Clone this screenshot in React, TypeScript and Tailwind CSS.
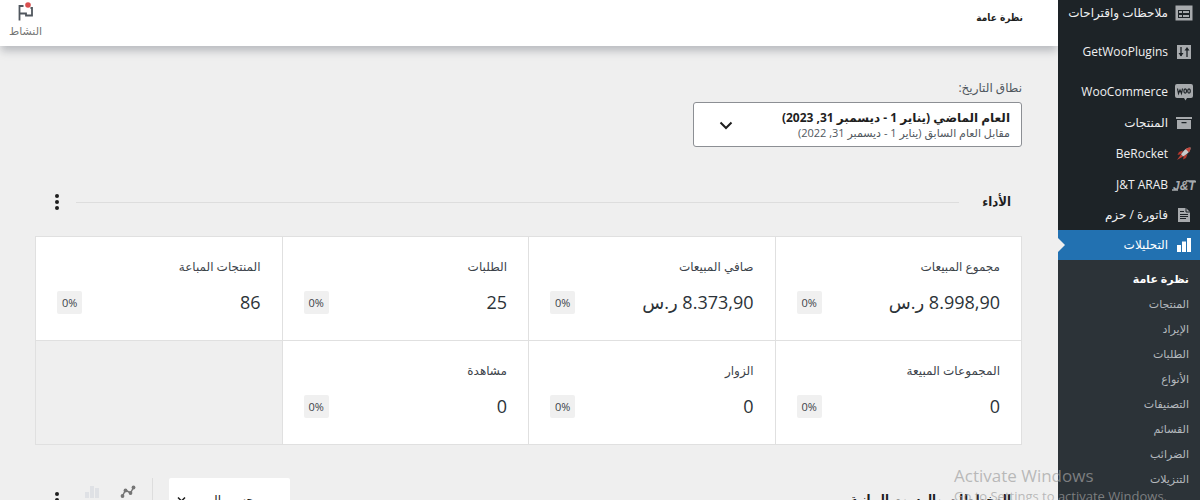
import type { ReactNode } from 'react';

type MenuItem = {
  label: string;
  icon: ReactNode;
  active?: boolean;
};

type Stat = {
  label: string;
  value: string;
  currency?: string;
};

const FeedbackIcon = () => (
  <svg width="18" height="16" viewBox="0 0 18 16" fill="#a7aaad">
    <path
      fillRule="evenodd"
      d="M0.500 0.500h17v15h-17zM3 5v8h12V5z"
    />
    <path d="M4 6h3v2H4zM8 6h6v2H8zM4 10h3v2H4zM8 10h6v2H8z" />
  </svg>
);

const SlidersIcon = () => (
  <svg width="18" height="16" viewBox="0 0 18 16">
    <rect x="2" y="1" width="14" height="14" fill="#a7aaad" />
    <path d="M6 3v9M12 5v8" stroke="#1d2327" strokeWidth="1.300" />
    <path d="M3.500 9h5L6 12.500zM9.500 6.500h5L12 3z" fill="#1d2327" />
  </svg>
);

const WooIcon = () => (
  <svg width="18" height="18" viewBox="0 0 18 18">
    <path
      d="M2 1h14a2 2 0 0 1 2 2v10a2 2 0 0 1-2 2h-4l-1.500 2.500L9 15H2a2 2 0 0 1-2-2V3a2 2 0 0 1 2-2z"
      fill="#a7aaad"
    />
    <path
      d="M2.500 5.500l1 5 1.500-3.500 1.500 3.500 1-5"
      fill="none"
      stroke="#1d2327"
      strokeWidth="1.200"
    />
    <ellipse cx="10.200" cy="8" rx="1.300" ry="2.100" fill="none" stroke="#1d2327" strokeWidth="1.200" />
    <ellipse cx="14" cy="8" rx="1.300" ry="2.100" fill="none" stroke="#1d2327" strokeWidth="1.200" />
  </svg>
);

const ArchiveIcon = () => (
  <svg width="18" height="16" viewBox="0 0 18 16" fill="#a7aaad">
    <path d="M1 2h16v2H1z" />
    <path fillRule="evenodd" d="M2 5h14v9H2zM6.500 7v1.200h5V7z" />
  </svg>
);

const RocketIcon = () => (
  <svg width="18" height="16" viewBox="0 0 18 16">
    <path d="M8 4.500L4 6 2.500 9l4-1zM12.500 8L11 12 8 13.500l1-4z" fill="#b5372c" />
    <path d="M15.500 1.500c-4 0-7 3-9.500 7L8 10.500c4.500-2.500 7.500-5 7.500-9z" fill="#c9cacb" />
    <path d="M15.500 1.500c-2 0-3.600.6-4.900 1.500l3.400 3.400c1-1.400 1.500-3 1.500-4.900z" fill="#c4453a" />
    <path d="M6 8.500L2 14l6-3.500z" fill="#c4453a" />
  </svg>
);

const JTIcon = () => (
  <svg className="shrink-0" width="24" height="16" viewBox="0 0 24 16">
    <text
      x="1"
      y="13"
      fill="#a7aaad"
      fontFamily="'Liberation Sans', sans-serif"
      fontSize="12"
      fontStyle="italic"
      fontWeight="700"
      direction="ltr"
    >
      J&amp;T
    </text>
    <path d="M0 13h6M14 4h9.500" stroke="#a7aaad" strokeWidth="1.500" />
  </svg>
);

const DocumentIcon = () => (
  <svg width="18" height="16" viewBox="0 0 18 16">
    <path d="M3 1h8l4 4v10H3z" fill="#a7aaad" />
    <path d="M11 1v4h4M5 4.500h4M5 7.500h8M5 9.500h8M5 11.500h6" stroke="#1d2327" fill="none" />
  </svg>
);

const BarsIcon = () => (
  <svg width="18" height="16" viewBox="0 0 18 16" fill="#ffffff">
    <path d="M2 8h4v7H2zM7 4.500h4V15H7zM12 1h4v14h-4z" />
  </svg>
);

const MutedBarsIcon = () => (
  <svg width="16" height="14" viewBox="0 0 16 14" fill="#dfe1e5">
    <path d="M1 7h4v6H1zM6 1h4v12H6zM11 3h4v10h-4z" />
  </svg>
);

const LineChartIcon = () => (
  <svg width="16" height="14" viewBox="0 0 16 14" fill="#757575">
    <path d="M2.500 11L5.500 5l5 3 3-5.500" fill="none" stroke="#757575" strokeWidth="1.500" />
    <circle cx="2.500" cy="11" r="1.900" />
    <circle cx="5.500" cy="5.500" r="1.900" />
    <circle cx="10.500" cy="8" r="1.900" />
    <circle cx="13.500" cy="2.500" r="1.900" />
  </svg>
);

const DotsIcon = () => (
  <svg width="6" height="18" viewBox="0 0 6 18" fill="#1e1e1e">
    <circle cx="3" cy="3" r="2" />
    <circle cx="3" cy="9" r="2" />
    <circle cx="3" cy="15" r="2" />
  </svg>
);

const ChevronIcon = () => (
  <svg width="14" height="10" viewBox="0 0 14 10">
    <path d="M1.500 2.500L7 8l5.500-5.500" fill="none" stroke="#1e1e1e" strokeWidth="2" />
  </svg>
);

const FlagIcon = () => (
  <svg width="18" height="20" viewBox="0 0 18 20">
    <path
      d="M6.500 5h-4v14.500M2.500 12.500H9v2h6V7h-1.500"
      fill="none"
      stroke="#50575e"
      strokeWidth="1.800"
    />
    <circle cx="11" cy="4" r="2.800" fill="#d94f4f" />
  </svg>
);

const pluginItems: MenuItem[] = [
  { label: 'ملاحظات واقتراحات', icon: <FeedbackIcon /> },
  { label: 'GetWooPlugins', icon: <SlidersIcon /> },
];

const storeItems: MenuItem[] = [
  { label: 'WooCommerce', icon: <WooIcon /> },
  { label: 'المنتجات', icon: <ArchiveIcon /> },
  { label: 'BeRocket', icon: <RocketIcon /> },
];

const shippingItems: MenuItem[] = [
  { label: 'J&T ARAB', icon: <JTIcon /> },
  { label: 'فاتورة / حزم', icon: <DocumentIcon /> },
  { label: 'التحليلات', icon: <BarsIcon />, active: true },
];

const subItems = [
  'نظرة عامة',
  'المنتجات',
  'الإيراد',
  'الطلبات',
  'الأنواع',
  'التصنيفات',
  'القسائم',
  'الضرائب',
  'التنزيلات',
];

const stats: Stat[] = [
  { label: 'مجموع المبيعات', value: '8.998,90', currency: 'ر.س' },
  { label: 'صافي المبيعات', value: '8.373,90', currency: 'ر.س' },
  { label: 'الطلبات', value: '25' },
  { label: 'المنتجات المباعة', value: '86' },
  { label: 'المجموعات المبيعة', value: '0' },
  { label: 'الزوار', value: '0' },
  { label: 'مشاهدة', value: '0' },
];

const MenuLink = ({ item }: { item: MenuItem }) => (
  <li>
    <a
      href="#"
      className={
        item.active
          ? 'relative flex h-[30px] items-center gap-1.5 bg-[#2271b1] pr-[7px] text-xs text-white'
          : 'relative flex h-[30px] items-center gap-1.5 pr-[7px] text-xs text-[#f0f0f1]'
      }
    >
      <span className="flex w-[19px] shrink-0 justify-center">{item.icon}</span>
      <span className="whitespace-nowrap">{item.label}</span>
      {item.active && (
        <span className="absolute top-2 left-0 border-y-[7px] border-l-[7px] border-y-transparent border-l-[#efefef]" />
      )}
    </a>
  </li>
);

const Sidebar = () => (
  <nav className="relative z-10 flex w-[142px] shrink-0 flex-col overflow-hidden bg-[#1d2327]">
    <ul className="-mt-0.5 mb-[10px] flex flex-col gap-[9px]">
      {pluginItems.map((item) => (
        <MenuLink key={item.label} item={item} />
      ))}
    </ul>
    <ul className="mb-px flex flex-col gap-px">
      {storeItems.map((item) => (
        <MenuLink key={item.label} item={item} />
      ))}
    </ul>
    <ul>
      {shippingItems.map((item) => (
        <MenuLink key={item.label} item={item} />
      ))}
    </ul>
    <ul className="flex-1 bg-[#2c3338] pt-[7px] pr-[11px]">
      {subItems.map((label, i) => (
        <li key={label}>
          <a
            href="#"
            className={
              i === 0
                ? 'flex h-[25px] items-center text-[11px] font-bold text-white'
                : 'flex h-[25px] items-center text-[11px] text-[#b4b9be]'
            }
          >
            {label}
          </a>
        </li>
      ))}
    </ul>
  </nav>
);

const StatCell = ({ stat }: { stat: Stat }) => (
  <li className="flex h-[104px] flex-col gap-[11px] border-b border-l border-[#e0e0e0] bg-white px-[21px] pt-5">
    <span className="text-xs leading-5 text-[#3c434a]">{stat.label}</span>
    <div className="flex items-center justify-between">
      <span className="text-lg leading-7 text-[#2c3338]">
        {stat.value}
        {stat.currency && ` ${stat.currency}`}
      </span>
      <span
        className="rounded-xs bg-[#f0f0f0] px-[5px] text-[11px] leading-[23px] text-[#3c434a]"
        dir="ltr"
      >
        0%
      </span>
    </div>
  </li>
);

const App = () => {
  return (
    <div
      dir="rtl"
      className="relative flex h-screen overflow-hidden bg-[#efefef] font-['Open_Sans','DejaVu_Sans',sans-serif] text-[#1e1e1e]"
    >
      <Sidebar />
      <div className="min-w-0 flex-1">
        <header className="flex h-[46px] items-start justify-between bg-white pr-[35px] pl-[9px] shadow-[0_6px_8px_-1px_rgba(85,93,102,0.35)]">
          <h1 className="pt-2 font-['DejaVu_Sans_Condensed','DejaVu_Sans',sans-serif] text-[10px] leading-5 font-bold">
            نظرة عامة
          </h1>
          <button
            type="button"
            className="flex flex-col items-center pt-px text-[11px] text-[#757575]"
          >
            <FlagIcon />
            <span className="leading-5">النشاط</span>
          </button>
        </header>

        <main className="pr-9 pl-[35px]">
          <div className="flex flex-col items-start pt-8">
            <label htmlFor="range" className="mb-1 text-xs leading-5 text-[#50575e]">
              نطاق التاريخ:
            </label>
            <button
              id="range"
              type="button"
              className="flex h-[45px] w-1/3 items-center justify-between rounded-[3px] border border-[#8c8f94] bg-white pr-[11px] pl-[25px]"
            >
              <span className="flex flex-col items-start whitespace-nowrap">
                <span className="text-xs leading-4 font-bold">
                  العام الماضي (يناير 1 - ديسمبر 31, 2023)
                </span>
                <span className="text-[11px] leading-[14px] text-[#50575e]">
                  مقابل العام السابق (يناير 1 - ديسمبر 31, 2022)
                </span>
              </span>
              <ChevronIcon />
            </button>
          </div>

          <section className="pt-[43px]">
            <div className="flex h-6 items-center gap-4 pr-[11px] pl-[19px]">
              <h2 className="ml-[7px] font-['DejaVu_Sans_Condensed','DejaVu_Sans',sans-serif] text-[13px] font-bold">
                الأداء
              </h2>
              <hr className="flex-1 border-[#dddddd]" />
              <button type="button" aria-label="خيارات">
                <DotsIcon />
              </button>
            </div>
            <ul className="mt-[22px] grid grid-cols-4 border-t border-r border-[#e0e0e0]">
              {stats.map((stat) => (
                <StatCell key={stat.label} stat={stat} />
              ))}
              <li className="border-b border-l border-[#e0e0e0]" />
            </ul>
          </section>

          <section className="mt-[33px] flex h-11 items-center gap-4 pr-[11px] pl-[19px]">
            <h2 className="ml-[7px] font-['DejaVu_Sans_Condensed','DejaVu_Sans',sans-serif] text-[13px] font-bold">
              المخططات والرسوم البيانية
            </h2>
            <hr className="ml-[7px] flex-1 border-[#dddddd]" />
            <div className="relative">
              <select
                aria-label="الفترة"
                className="h-11 w-[121px] appearance-none rounded-xs bg-white pr-9 pl-6 text-xs"
              >
                <option>حسب اليوم</option>
              </select>
              <svg
                className="pointer-events-none absolute top-[18px] left-2"
                width="9"
                height="7"
                viewBox="0 0 9 7"
              >
                <path d="M1 1.500L4.500 5 8 1.500" fill="none" stroke="#1e1e1e" strokeWidth="1.500" />
              </svg>
            </div>
            <div className="ml-2 flex h-11 items-start gap-5 border-r border-[#dddddd] pt-[7px] pr-4">
              <button type="button" aria-label="مخطط خطي">
                <LineChartIcon />
              </button>
              <button type="button" aria-label="مخطط شريطي">
                <MutedBarsIcon />
              </button>
            </div>
            <button type="button" aria-label="خيارات">
              <DotsIcon />
            </button>
          </section>
        </main>
      </div>

      <div
        dir="ltr"
        className="pointer-events-none absolute top-[464px] right-9 z-20 w-[210px] whitespace-nowrap text-[#a0a0a0]/70"
      >
        <p className="text-[17px] leading-6">Activate Windows</p>
        <p className="text-[13px] leading-4">Go to Settings to activate Windows.</p>
      </div>
    </div>
  );
};

export default App;
